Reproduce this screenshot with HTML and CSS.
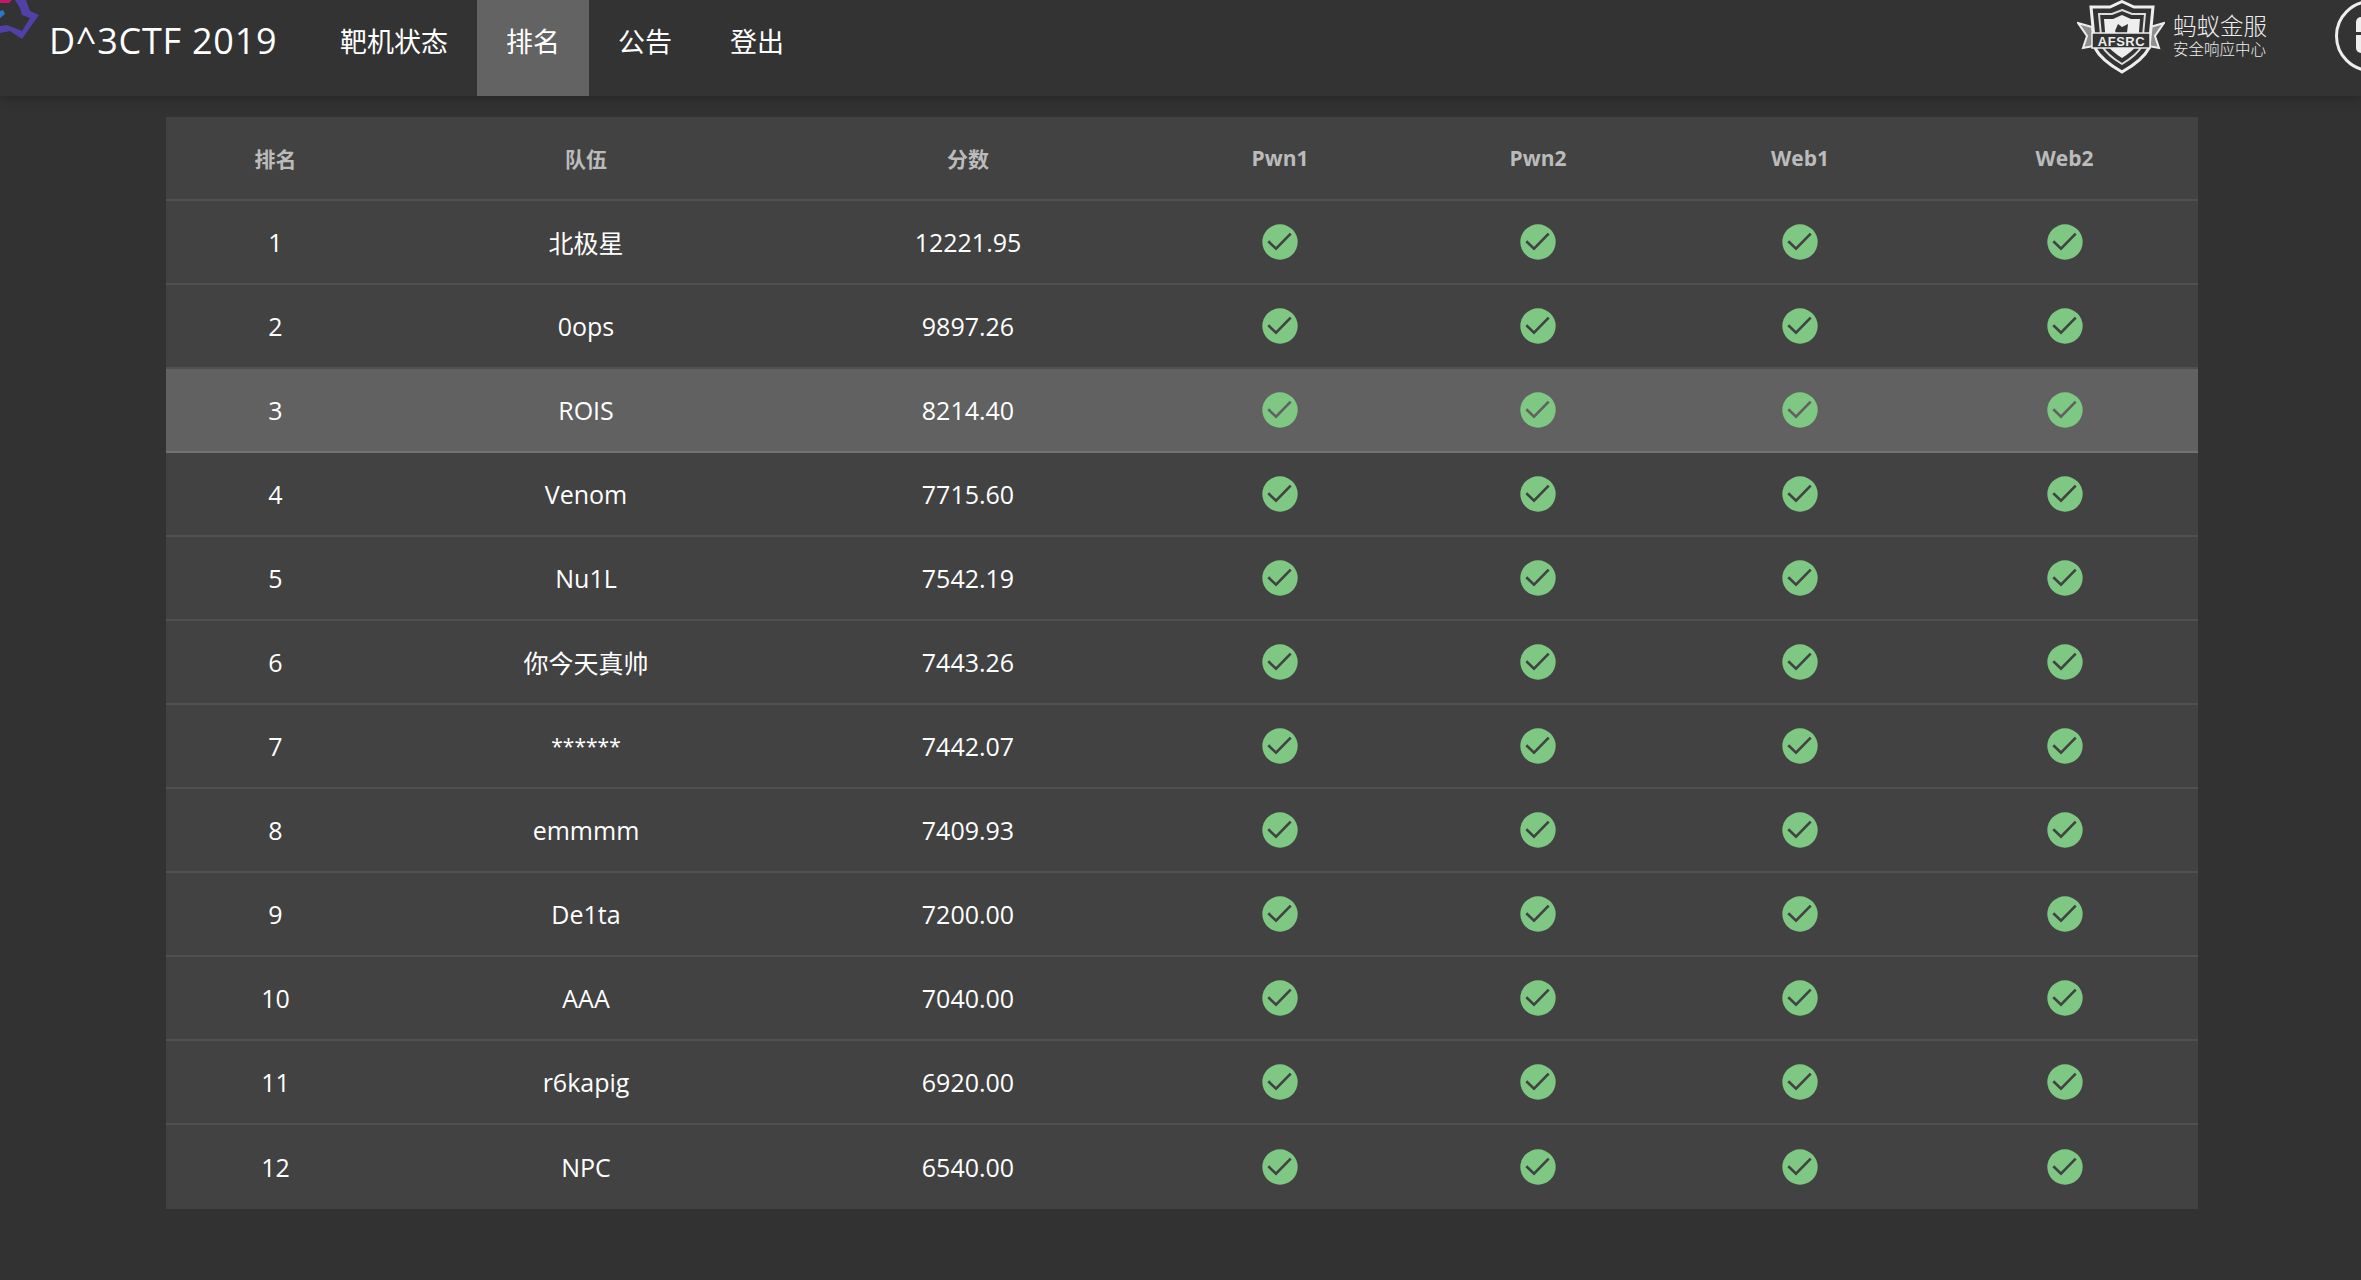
FILE: index.html
```html
<!DOCTYPE html>
<html lang="zh">
<head>
<meta charset="utf-8">
<title>D^3CTF 2019</title>
<link rel="stylesheet" href="styles.css">
</head>
<body>
<svg width="0" height="0" class="defs"><defs>
<symbol id="ok" viewBox="0 0 36 36"><circle cx="18" cy="18" r="17.7" fill="#7ec883"/><path d="M6.3 17.3L14 24.7 28.7 9.7" fill="none" stroke="currentColor" stroke-width="2.6"/></symbol>
</defs></svg>
<header class="topbar">
  <svg class="logo" width="44" height="44" viewBox="0 0 44 44"><path d="M0 0H12L9 3H0Z" fill="#c2186b"/><path d="M0 18L5 14 3 10 0 11Z" fill="#2a78c8"/><path d="M26 0L30 11 39 15 22 39 10 31 0 33V26L7 25 22 31 30 18 22 15 20 8 15 0Z" fill="#5140a8"/></svg>
  <div class="brand">D^3CTF 2019</div>
  <nav class="nav">
    <a class="nav-item">靶机状态</a>
    <a class="nav-item active">排名</a>
    <a class="nav-item">公告</a>
    <a class="nav-item">登出</a>
  </nav>
  <div class="spacer"></div>
  <div class="afsrc">
    <svg class="shield" width="88" height="74" viewBox="0 0 88 74">
      <path d="M1 23L15 27 17 46 6 48 10 36ZM87 23L73 27 71 46 82 48 78 36Z" fill="#8f8f8f" stroke="#eee" stroke-width="2"/>
      <path d="M45 1.5L57 7H76L72 48Q66 60 45 72 24 60 18 48L14 7H33Z" fill="#333" stroke="#eee" stroke-width="3"/>
      <path d="M45 10L55 14H68L65 46Q60 55 45 64 30 55 25 46L22 14H35Z" fill="#333" stroke="#ddd" stroke-width="2"/>
      <path d="M45 15L54 19H63L61 44Q56 51 45 58 34 51 29 44L27 19H36Z" fill="#eee"/>
      <path d="M38 31L41 24 45 27 51 24 50 33H39Z" fill="#333"/>
      <rect x="15" y="33" width="58" height="15" fill="#333" stroke="#eee" stroke-width="1.5"/>
      <text x="44.5" y="45.5" text-anchor="middle" class="shield-text">AFSRC</text>
    </svg>
    <div class="afsrc-text">
      <div class="afsrc-main">蚂蚁金服</div>
      <div class="afsrc-sub">安全响应中心</div>
    </div>
  </div>
  <div class="avatar"><span class="avatar-mark"></span></div>
</header>
<main class="content">
<table class="board">
  <thead>
    <tr><th class="c1">排名</th><th class="c2">队伍</th><th class="c3">分数</th><th class="c4">Pwn1</th><th class="c5">Pwn2</th><th class="c6">Web1</th><th class="c7">Web2</th></tr>
  </thead>
  <tbody>
    <tr><td>1</td><td>北极星</td><td>12221.95</td><td><svg class="ok"><use href="#ok"/></svg></td><td><svg class="ok"><use href="#ok"/></svg></td><td><svg class="ok"><use href="#ok"/></svg></td><td><svg class="ok"><use href="#ok"/></svg></td></tr>
    <tr><td>2</td><td>0ops</td><td>9897.26</td><td><svg class="ok"><use href="#ok"/></svg></td><td><svg class="ok"><use href="#ok"/></svg></td><td><svg class="ok"><use href="#ok"/></svg></td><td><svg class="ok"><use href="#ok"/></svg></td></tr>
    <tr class="hover"><td>3</td><td>ROIS</td><td>8214.40</td><td><svg class="ok"><use href="#ok"/></svg></td><td><svg class="ok"><use href="#ok"/></svg></td><td><svg class="ok"><use href="#ok"/></svg></td><td><svg class="ok"><use href="#ok"/></svg></td></tr>
    <tr><td>4</td><td>Venom</td><td>7715.60</td><td><svg class="ok"><use href="#ok"/></svg></td><td><svg class="ok"><use href="#ok"/></svg></td><td><svg class="ok"><use href="#ok"/></svg></td><td><svg class="ok"><use href="#ok"/></svg></td></tr>
    <tr><td>5</td><td>Nu1L</td><td>7542.19</td><td><svg class="ok"><use href="#ok"/></svg></td><td><svg class="ok"><use href="#ok"/></svg></td><td><svg class="ok"><use href="#ok"/></svg></td><td><svg class="ok"><use href="#ok"/></svg></td></tr>
    <tr><td>6</td><td>你今天真帅</td><td>7443.26</td><td><svg class="ok"><use href="#ok"/></svg></td><td><svg class="ok"><use href="#ok"/></svg></td><td><svg class="ok"><use href="#ok"/></svg></td><td><svg class="ok"><use href="#ok"/></svg></td></tr>
    <tr><td>7</td><td><span class="masked">******</span></td><td>7442.07</td><td><svg class="ok"><use href="#ok"/></svg></td><td><svg class="ok"><use href="#ok"/></svg></td><td><svg class="ok"><use href="#ok"/></svg></td><td><svg class="ok"><use href="#ok"/></svg></td></tr>
    <tr><td>8</td><td>emmmm</td><td>7409.93</td><td><svg class="ok"><use href="#ok"/></svg></td><td><svg class="ok"><use href="#ok"/></svg></td><td><svg class="ok"><use href="#ok"/></svg></td><td><svg class="ok"><use href="#ok"/></svg></td></tr>
    <tr><td>9</td><td>De1ta</td><td>7200.00</td><td><svg class="ok"><use href="#ok"/></svg></td><td><svg class="ok"><use href="#ok"/></svg></td><td><svg class="ok"><use href="#ok"/></svg></td><td><svg class="ok"><use href="#ok"/></svg></td></tr>
    <tr><td>10</td><td>AAA</td><td>7040.00</td><td><svg class="ok"><use href="#ok"/></svg></td><td><svg class="ok"><use href="#ok"/></svg></td><td><svg class="ok"><use href="#ok"/></svg></td><td><svg class="ok"><use href="#ok"/></svg></td></tr>
    <tr><td>11</td><td>r6kapig</td><td>6920.00</td><td><svg class="ok"><use href="#ok"/></svg></td><td><svg class="ok"><use href="#ok"/></svg></td><td><svg class="ok"><use href="#ok"/></svg></td><td><svg class="ok"><use href="#ok"/></svg></td></tr>
    <tr><td>12</td><td>NPC</td><td>6540.00</td><td><svg class="ok"><use href="#ok"/></svg></td><td><svg class="ok"><use href="#ok"/></svg></td><td><svg class="ok"><use href="#ok"/></svg></td><td><svg class="ok"><use href="#ok"/></svg></td></tr>
  </tbody>
</table>
</main>
</body>
</html>
```
FILE: styles.css
```css
* { box-sizing: border-box; }
html, body { margin: 0; height: 100%; overflow: hidden; }
body {
  background: #323232;
  color: #fff;
  font-family: "Open Sans", "Noto Sans CJK SC", sans-serif;
}
.defs { position: absolute; }
.topbar {
  position: relative;
  display: flex;
  align-items: stretch;
  height: 96px;
  background: #333;
  box-shadow: 0 2px 12px rgba(0,0,0,.25);
}
.logo { position: absolute; left: 0; top: 0; }
.brand {
  margin-left: 49px;
  width: 262px;
  font-size: 36px;
  line-height: 82px;
  letter-spacing: .75px;
}
.nav { display: flex; }
.nav-item {
  padding: 0 29px;
  font-size: 27px;
  line-height: 84px;
  color: #fff;
}
.nav-item.active { background: #636363; }
.spacer { flex: 1; }
.afsrc { display: flex; gap: 8px; align-items: flex-start; margin-right: 68px; }
.shield-text { font: bold 13px "Liberation Sans", sans-serif; letter-spacing: .5px; fill: #eee; }
.afsrc-text { padding-top: 12px; color: #eee; white-space: nowrap; }
.afsrc-main { font-size: 23.5px; line-height: 28px; font-weight: 300; }
.afsrc-sub { font-size: 15.5px; line-height: 18px; font-weight: 300; }
.avatar {
  width: 72px;
  height: 72px;
  margin-right: -46px;
  border: 3px solid #eee;
  border-radius: 50%;
  padding: 14px 0 0 18px;
  flex: none;
}
.avatar-mark {
  display: block;
  width: 30px;
  height: 36px;
  border-radius: 5px;
  background: linear-gradient(#eee 15px, #333 15px, #333 18px, #eee 18px);
}
.content { padding: 21px 163px 0 166px; }
.board {
  width: 2032px;
  table-layout: fixed;
  border-collapse: separate;
  border-spacing: 0;
  background: #424242;
  text-align: center;
}
.c1 { width: 219px; }
.c2 { width: 402px; }
.c3 { width: 362px; }
.c4 { width: 262px; }
.c5 { width: 254px; }
.c6 { width: 268px; }
.c7 { width: 265px; }
th, td { height: 84px; padding: 0; border-bottom: 2px solid #505050; }
th:nth-child(6), td:nth-child(6) { padding-left: 2px; }
th:nth-child(7), td:nth-child(7) { padding-right: 2px; }
th { font-size: 21px; font-weight: 700; color: #bbb; }
td { font-size: 25px; }
.masked { font-size: 21px; vertical-align: 2px; }
tbody tr:last-child td { border-bottom: 0; }
.hover td { background: #616161; border-bottom-color: #727272; }
.ok { display: block; width: 36px; height: 36px; margin: 0 auto; color: #424242; }
.hover .ok { color: #616161; }
```
